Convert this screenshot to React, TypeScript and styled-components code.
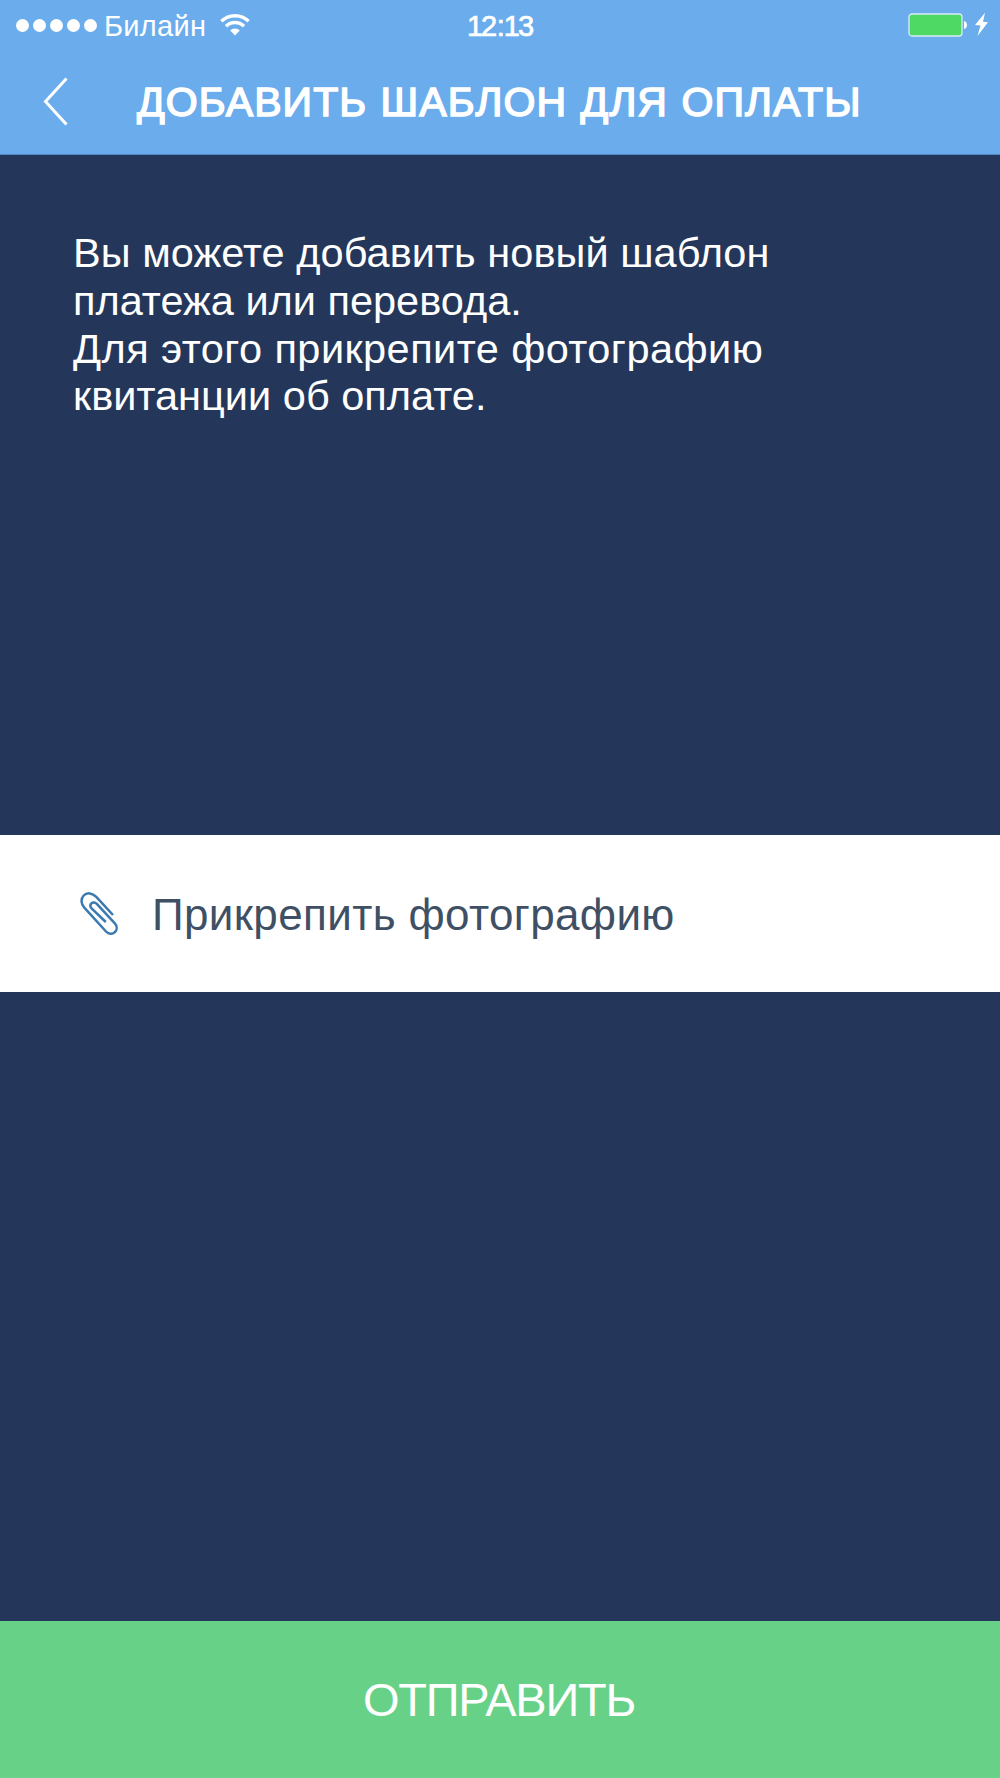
import React from "react";
import styled, { createGlobalStyle } from "styled-components";

const GlobalStyle = createGlobalStyle`
  * { box-sizing: border-box; }
  body { margin: 0; background: #24375a; }
`;

const Screen = styled.div`
  display: flex;
  flex-direction: column;
  width: 1000px;
  height: 1778px;
  overflow: hidden;
  background: #24375a;
  color: #fff;
  font-family: "Liberation Sans", Arial, Helvetica, sans-serif;
`;

const Header = styled.header`
  flex: none;
  height: 155px;
  background: #6bacec;
  border-bottom: 1px solid #5088c0;
`;

const StatusBar = styled.div`
  display: grid;
  grid-template-columns: 1fr auto 1fr;
  align-items: center;
  height: 50px;
  padding: 0 12px 0 16px;
`;

const StatusGroup = styled.div<{ $end?: boolean }>`
  display: flex;
  align-items: center;
  justify-content: ${(p) => (p.$end ? "flex-end" : "flex-start")};
`;

const SignalDots = styled.div`
  display: flex;
  gap: 4px;
`;

const Dot = styled.span`
  width: 13px;
  height: 13px;
  border-radius: 50%;
  background: #fff;
`;

const Carrier = styled.span`
  margin: 2px 14px 0 7px;
  font-size: 29px;
  line-height: 32px;
  letter-spacing: 0.3px;
`;

const Clock = styled.span`
  margin: 1px 5px 0 0;
  font-size: 29px;
  line-height: 32px;
  letter-spacing: -2px;
  -webkit-text-stroke: 0.7px #fff;
`;

const ClockColon = styled.span`
  margin: 0 1px 0 1.5px;
`;

const TitleBar = styled.div`
  display: flex;
  align-items: center;
  height: 104px;
  padding-left: 42px;
`;

const BackButton = styled.button`
  display: flex;
  width: 28px;
  padding: 0;
  border: 0;
  background: none;
`;

const Title = styled.h1`
  margin: 0 0 0 67px;
  font-size: 41px;
  font-weight: 400;
  line-height: 48px;
  letter-spacing: 1.05px;
  word-spacing: 1px;
  white-space: nowrap;
  -webkit-text-stroke: 1.5px #fff;
`;

const Intro = styled.section`
  flex: none;
  height: 680px;
  padding: 74px 0 0 73px;
`;

const Line = styled.p<{ $spacing: number }>`
  margin: 0;
  font-size: 41.5px;
  line-height: 47.8px;
  letter-spacing: ${(p) => p.$spacing}px;
  white-space: nowrap;
`;

const AttachRow = styled.button`
  display: flex;
  flex: none;
  align-items: center;
  height: 157px;
  padding: 0 0 0 80px;
  border: 0;
  background: #fff;
  color: #3f5065;
  font-family: inherit;
`;

const AttachLabel = styled.span`
  margin: 2px 0 0 32px;
  font-size: 44px;
  line-height: 50px;
  letter-spacing: 0.36px;
  white-space: nowrap;
`;

const SubmitButton = styled.button`
  flex: none;
  height: 157px;
  margin-top: auto;
  padding: 0 2px 0 0;
  border: 0;
  background: #67d187;
  color: #fff;
  font-family: inherit;
  font-size: 47px;
  line-height: 54px;
  letter-spacing: -1.25px;
`;

const introLines = [
  { text: "Вы можете добавить новый шаблон", spacing: 0.05 },
  { text: "платежа или перевода.", spacing: 0 },
  { text: "Для этого прикрепите фотографию", spacing: 0.44 },
  { text: "квитанции об оплате.", spacing: 0.02 },
];

const WifiIcon = () => (
  <svg width="30" height="25" viewBox="0 0 30 25" fill="none" stroke="#fff">
    <path d="M1.400 8.200C9 .8 21 .8 28.600 8.200" strokeWidth="3.5" />
    <path d="M6 13.200c5-5 13-5 18 0" strokeWidth="3.5" />
    <path d="M10.200 17.600c2.600-2.900 7-2.900 9.600 0L15 22.600z" fill="#fff" stroke="none" />
  </svg>
);

const BatteryIcon = () => (
  <svg width="80" height="26" viewBox="0 0 80 26">
    <rect x="1" y="2" width="53" height="22" rx="3" fill="#4dd964" stroke="#d9ecfa" strokeWidth="1.3" />
    <path d="M56 9c4 1 4 7 0 8z" fill="#fff" />
    <path d="M77 .7 67 13l5.500.5-3 10.500L80 10.300l-5-.6z" fill="#fff" />
  </svg>
);

const ChevronIcon = () => (
  <svg width="28" height="50" viewBox="0 0 28 50" fill="none" stroke="#fff" strokeWidth="3">
    <path d="M24.5 1.5 3.5 24.5l21 23" />
  </svg>
);

const PaperclipIcon = () => (
  <svg width="40" height="44" viewBox="0 0 40 44" fill="none" stroke="#3a7ab0" strokeWidth="2.5">
    <path d="M33 23 16.300 4.800C12.500 0.700 6.700 0.300 3.700 3.500 0.600 6.800 0.900 12 4.300 15.700L26 39.500c2.700 2.800 6.500 3 8.900 0.600 2.500-2.500 2.300-6.200-0.300-8.900L16.800 11.900c-1.800-1.800-4-1.900-5.400-0.500-1.400 1.400-1.200 3.500 0.400 5.200L25.800 30" />
  </svg>
);

export default function App() {
  return (
    <Screen>
      <GlobalStyle />
      <Header>
        <StatusBar>
          <StatusGroup>
            <SignalDots>
              {[0, 1, 2, 3, 4].map((i) => (
                <Dot key={i} />
              ))}
            </SignalDots>
            <Carrier>Билайн</Carrier>
            <WifiIcon />
          </StatusGroup>
          <Clock>
            12<ClockColon>:</ClockColon>13
          </Clock>
          <StatusGroup $end>
            <BatteryIcon />
          </StatusGroup>
        </StatusBar>
        <TitleBar>
          <BackButton aria-label="Назад">
            <ChevronIcon />
          </BackButton>
          <Title>ДОБАВИТЬ ШАБЛОН ДЛЯ ОПЛАТЫ</Title>
        </TitleBar>
      </Header>
      <Intro>
        {introLines.map((line) => (
          <Line key={line.text} $spacing={line.spacing}>
            {line.text}
          </Line>
        ))}
      </Intro>
      <AttachRow>
        <PaperclipIcon />
        <AttachLabel>Прикрепить фотографию</AttachLabel>
      </AttachRow>
      <SubmitButton>ОТПРАВИТЬ</SubmitButton>
    </Screen>
  );
}
